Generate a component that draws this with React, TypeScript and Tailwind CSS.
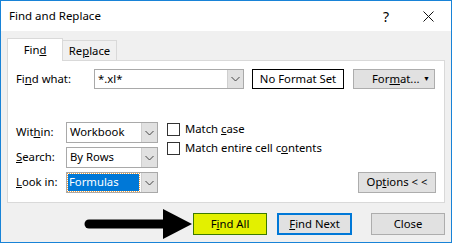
import React from "react";

const font = { fontFamily: '"Noto Sans", "Liberation Sans", sans-serif' };

function Chevron() {
  return (
    <svg width="9" height="6" viewBox="0 0 9 6" className="block">
      <path d="M0.5 1 L4.5 5 L8.5 1" fill="none" stroke="#444" strokeWidth="1" />
    </svg>
  );
}

function Select({ value, selected }: { value: string; selected?: boolean }) {
  return (
    <div className="flex h-[21px] w-[92px] border border-[#a9a9a9] bg-white">
      <div className="flex flex-1 items-center px-[1px]">
        {selected ? (
          <span className="flex h-[17px] w-[71px] items-center bg-[#0078d7] px-[1px] text-white outline outline-1 outline-dotted outline-[#f0a040]">
            {value}
          </span>
        ) : (
          <span className="pl-[2px]">{value}</span>
        )}
      </div>
      <div className="flex w-[16px] items-center justify-center border-l border-[#cfcfcf] bg-[#e1e1e1]">
        <Chevron />
      </div>
    </div>
  );
}

function Check({ children }: { children: React.ReactNode }) {
  return (
    <div className="flex h-[13px] items-center gap-[5px]">
      <div className="h-[13px] w-[13px] border border-[#333] bg-white" />
      <span>{children}</span>
    </div>
  );
}

export default function App() {
  return (
    <div
      className="flex h-[243px] w-[452px] flex-col border border-[#1883d7] bg-[#f0f0f0] text-[11.3px] text-black"
      style={font}
    >
      {/* title bar */}
      <div className="flex h-[30px] items-center bg-white pl-[8px]">
        <span className="text-[11.5px]">Find and Replace</span>
        <span className="ml-auto mr-[34px] text-[14px]">?</span>
        <svg width="11" height="11" viewBox="0 0 11 11" className="mr-[17px]">
          <path d="M0.5 0.5 L10.5 10.5 M10.5 0.5 L0.5 10.5" stroke="#111" strokeWidth="1" />
        </svg>
      </div>

      <div className="flex flex-col px-[6px]">
        {/* tabs */}
        <div className="mt-[7px] flex items-end">
          <div className="relative z-10 -mb-px flex h-[23px] w-[56px] items-start justify-center border border-b-0 border-[#d9d9d9] bg-white pt-[3px]">
            <span>
              Fin<u>d</u>
            </span>
          </div>
          <div className="flex h-[20px] w-[54px] items-start justify-center border border-l-0 border-b-0 border-[#d9d9d9] bg-[#f0f0f0] pt-[2px]">
            <span>
              Re<u>p</u>lace
            </span>
          </div>
        </div>

        {/* panel */}
        <div className="flex h-[143px] flex-col border border-[#d9d9d9] bg-white pl-[8px] pr-[8px] pt-[8px]">
          <div className="flex items-center">
            <span className="w-[78px]">
              Fi<u>n</u>d what:
            </span>
            <div className="flex h-[20px] w-[150px] border border-[#a9a9a9] bg-white">
              <span className="flex-1 pl-[3px] leading-[18px]">*.xl*</span>
              <div className="flex w-[16px] items-center justify-center border-l border-[#cfcfcf] bg-[#e1e1e1]">
                <Chevron />
              </div>
            </div>
            <div className="ml-[8px] flex h-[20px] w-[92px] items-center justify-center border border-black bg-white">
              No Format Set
            </div>
            <div className="ml-[9px] flex h-[20px] w-[82px] items-center border border-[#adadad] bg-[#e1e1e1] pl-[18px]">
              <span>
                For<u>m</u>at...
              </span>
              <span className="ml-auto mr-[4px] text-[7px]">▼</span>
            </div>
          </div>

          <div className="mt-[33px] flex">
            <div className="flex flex-col gap-[4px]">
              <div className="flex items-center">
                <span className="w-[50px]">
                  Wit<u>h</u>in:
                </span>
                <Select value="Workbook" />
              </div>
              <div className="flex items-center">
                <span className="w-[50px]">
                  <u>S</u>earch:
                </span>
                <Select value="By Rows" />
              </div>
              <div className="flex items-center">
                <span className="w-[50px]">
                  <u>L</u>ook in:
                </span>
                <Select value="Formulas" selected />
              </div>
            </div>
            <div className="ml-[9px] flex flex-1 flex-col">
              <div className="mt-[1px] flex flex-col gap-[6px]">
                <Check>
                  Match <u>c</u>ase
                </Check>
                <Check>
                  Match entire cell c<u>o</u>ntents
                </Check>
              </div>
              <div className="mt-auto flex justify-end">
                <div className="flex h-[21px] w-[78px] items-center justify-center border border-[#adadad] bg-[#e1e1e1]">
                  <span>
                    Op<u>t</u>ions &lt; &lt;
                  </span>
                </div>
              </div>
            </div>
          </div>
        </div>

        {/* bottom buttons */}
        <div className="mt-[6px] flex items-center">
          <svg width="110" height="30" viewBox="0 0 110 30" className="ml-[76px]">
            <path d="M6 15 L82 15" stroke="#000" strokeWidth="9" strokeLinecap="round" />
            <path d="M80 0 L109 15 L80 30 Z" fill="#000" />
          </svg>
          <div className="flex h-[22px] w-[74px] items-center justify-center border border-[#3c7a00] bg-[#e3f000]">
            <span>
              F<u>i</u>nd All
            </span>
          </div>
          <div className="ml-[10px] flex h-[22px] w-[75px] items-center justify-center border-2 border-[#0078d7] bg-[#e1e1e1]">
            <span>
              <u>F</u>ind Next
            </span>
          </div>
          <div className="ml-[19px] flex h-[22px] w-[74px] items-center justify-center border border-[#adadad] bg-[#e1e1e1]">
            Close
          </div>
        </div>
      </div>
    </div>
  );
}
